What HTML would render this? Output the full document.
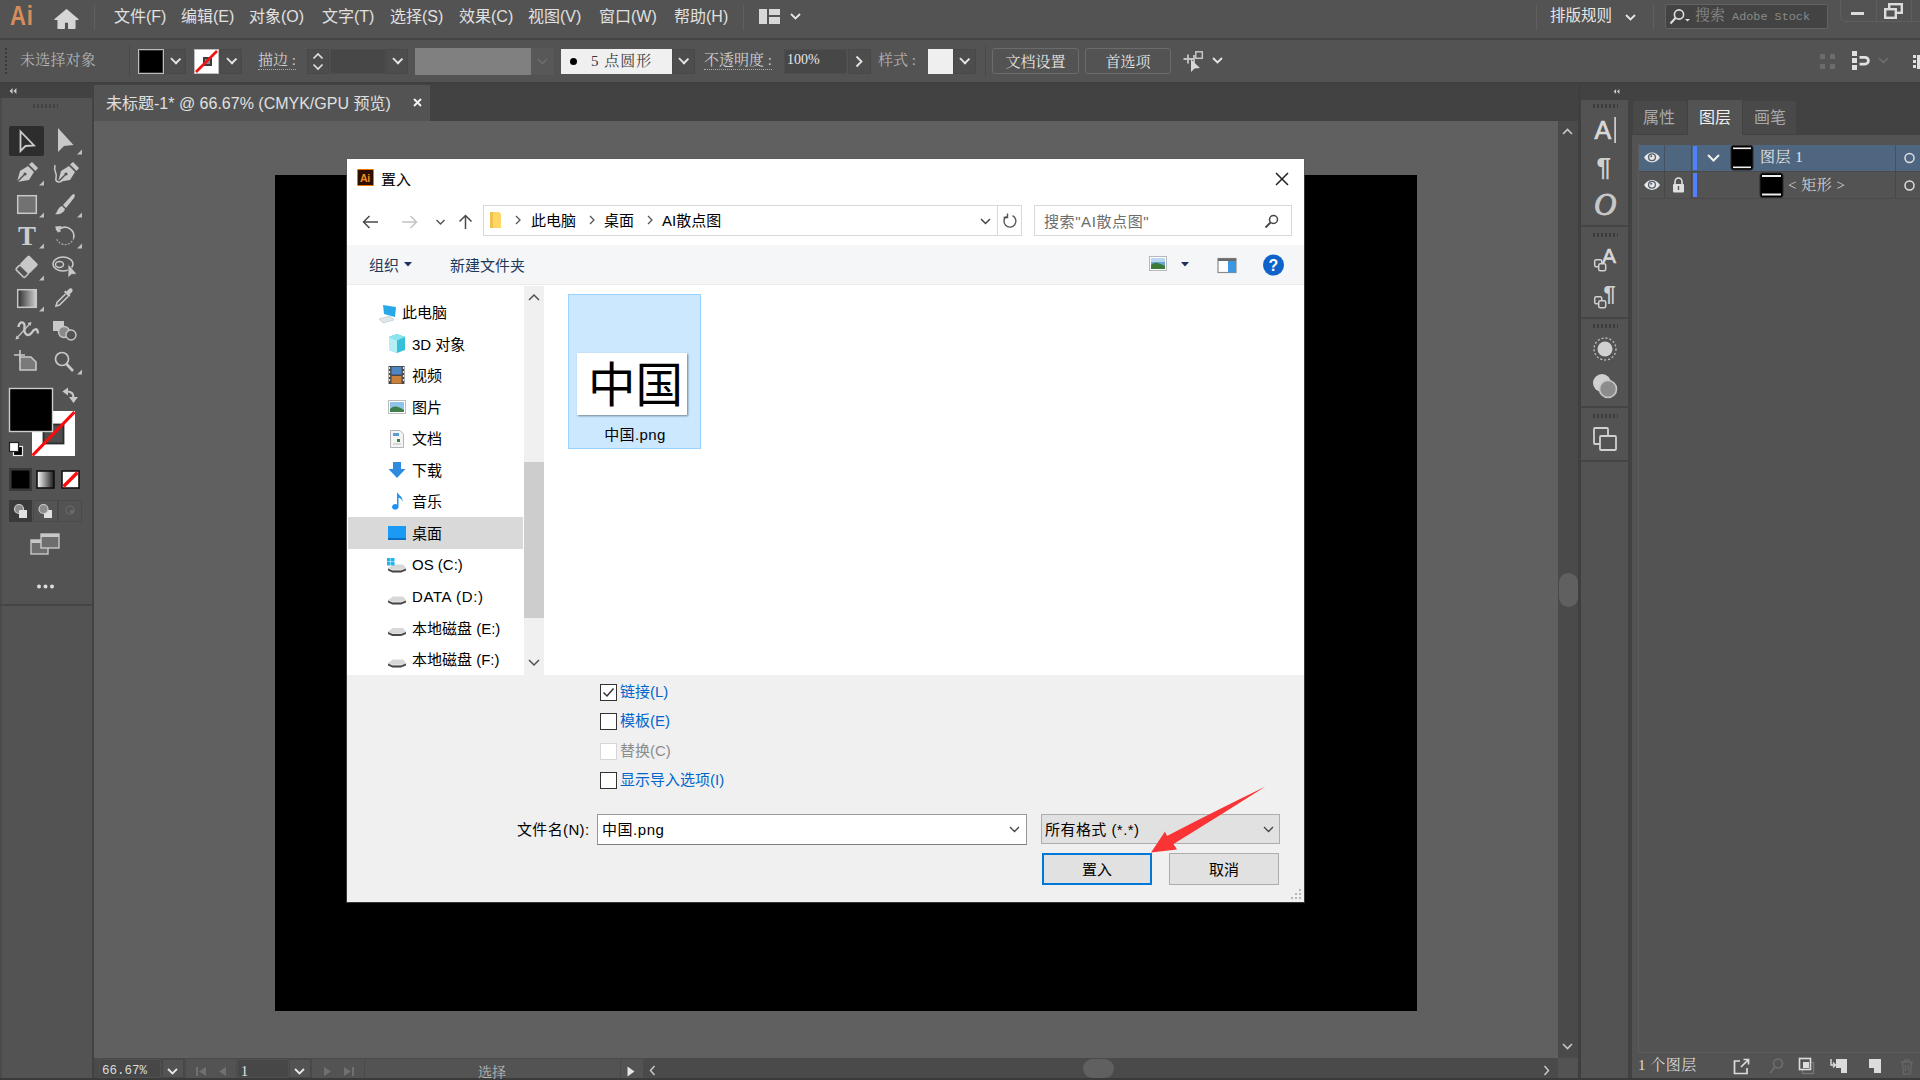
<!DOCTYPE html>
<html lang="zh-CN">
<head>
<meta charset="utf-8">
<title>Adobe Illustrator</title>
<style>
*{box-sizing:border-box;margin:0;padding:0}
html,body{width:1920px;height:1080px;overflow:hidden;background:#535353}
body{font-family:"Liberation Sans","Noto Sans CJK SC",sans-serif;font-size:15px;color:#dcdcdc;position:relative}
.abs{position:absolute}
.t{position:absolute;white-space:nowrap;line-height:1}
svg{position:absolute;overflow:visible}
/* ---------- app chrome ---------- */
#menubar{left:0;top:0;width:1920px;height:38px;background:#535353}
#menusep{left:0;top:38px;width:1920px;height:2px;background:#454545}
#ctrlbar{left:0;top:40px;width:1920px;height:43px;background:#535353}
#ctrlsep{left:0;top:82px;width:1920px;height:2px;background:#3f3f3f}
#tabbar{left:94px;top:84px;width:1484px;height:37px;background:#424242}
#tab{left:94px;top:85px;width:336px;height:36px;background:#535353}
#canvas{left:94px;top:121px;width:1464px;height:937px;background:#606060}
#artboard{left:275px;top:175px;width:1142px;height:836px;background:#000}
#leftdock{left:0;top:84px;width:92px;height:996px;background:#535353}
#leftgap{left:92px;top:84px;width:2px;height:996px;background:#424242}
#lefthead{left:0;top:84px;width:92px;height:14px;background:#424242}
.menu .t{top:9px;font-size:16px;color:#e0e0e0}
.cb{font-family:"Liberation Serif","Noto Serif CJK SC",serif}
.dd{background:#4d4d4d;border:1px solid #484848}
.dd::after{content:"";position:absolute;left:6.5px;top:4.5px;width:7.5px;height:7.5px;border-right:2.2px solid #e6e6e6;border-bottom:2.2px solid #e6e6e6;transform:rotate(45deg) scale(1,.92);box-sizing:border-box}
.dd2{background:#4d4d4d;border:1px solid #484848}
.btn{border:1px solid #6b6b6b;border-radius:3px;text-align:center;font-size:15px;color:#e6e6e6;line-height:26.5px;background:#535353}
.grip{width:25px;height:4px;background:repeating-linear-gradient(90deg,#3c3c3c 0 2px,transparent 2px 4px)}
.hsep{left:1581px;width:48px;height:2px;background:#454545}
#dialog{left:347px;top:159px;width:957px;height:743px;border-top:1px solid #fff;background:#fff;box-shadow:0 0 0 1px rgba(90,90,90,.6)}
.dl{font-size:15px;color:#000;margin-top:1px}
.ck{width:17px;height:17px;background:#fff;border:1px solid #333}
</style>
</head>
<body>
<!-- ============ MENU BAR ============ -->
<div id="menubar" class="abs menu">
  <div class="t" style="left:10px;top:3px;font-size:27px;font-weight:bold;color:#d58d5c;letter-spacing:0.8px;transform:scaleX(.82);transform-origin:0 0">Ai</div>
  <svg style="left:54.500px;top:8.500px" width="23" height="20" viewBox="0 0 26 21"><path d="M13 0 L26 11 L22.500 11 L22.500 21 L15.500 21 L15.500 14 L10.500 14 L10.500 21 L3.500 21 L3.500 11 L0 11 Z" fill="#d6d6d6" stroke="#d6d6d6" stroke-width="1.500" stroke-linejoin="round"/></svg>
  <div class="abs" style="left:94px;top:5px;width:1px;height:25px;background:#606060"></div>
  <div class="t" style="left:114px">文件(F)</div>
  <div class="t" style="left:181px">编辑(E)</div>
  <div class="t" style="left:249px">对象(O)</div>
  <div class="t" style="left:322px">文字(T)</div>
  <div class="t" style="left:390px">选择(S)</div>
  <div class="t" style="left:459px">效果(C)</div>
  <div class="t" style="left:528px">视图(V)</div>
  <div class="t" style="left:599px">窗口(W)</div>
  <div class="t" style="left:674px">帮助(H)</div>
  <div class="abs" style="left:743px;top:5px;width:1px;height:25px;background:#606060"></div>
  <svg style="left:759px;top:9px" width="21" height="15" viewBox="0 0 21 15"><rect x="0" y="0" width="8" height="15" fill="#d8d8d8"/><rect x="10" y="0" width="11" height="6" fill="#d8d8d8"/><rect x="10" y="8" width="11" height="7" fill="#d8d8d8"/></svg>
  <svg style="left:790px;top:13px" width="11" height="7" viewBox="0 0 11 7"><path d="M1 1 L5.5 5.5 L10 1" fill="none" stroke="#e6e6e6" stroke-width="1.8"/></svg>

  <div class="abs" style="left:1536px;top:5px;width:1px;height:25px;background:#606060"></div>
  <div class="t" style="left:1550px;top:8px;font-size:15.5px;color:#e6e6e6">排版规则</div>
  <svg style="left:1625px;top:14px" width="11" height="7" viewBox="0 0 11 7"><path d="M1 1 L5.5 5.5 L10 1" fill="none" stroke="#e6e6e6" stroke-width="1.8"/></svg>
  <div class="abs" style="left:1653px;top:5px;width:1px;height:25px;background:#606060"></div>
  <div class="abs" style="left:1665px;top:4px;width:163px;height:25px;background:#434343;border:1px solid #626262;border-radius:2px"></div>
  <svg style="left:1669px;top:8px" width="22" height="17" viewBox="0 0 22 17"><circle cx="10" cy="6.5" r="4.6" fill="none" stroke="#e0e0e0" stroke-width="1.6"/><path d="M6.5 10 L1.5 15.5" stroke="#e0e0e0" stroke-width="2"/><path d="M16 11 L21 11 L18.5 13.5 Z" fill="#e0e0e0"/></svg>
  <div class="t cb" style="left:1695px;top:8px;font-size:15px;color:#8a8a8a">搜索<span style="font-family:'Liberation Mono',monospace;font-size:11.8px"> Adobe Stock</span></div>
  <div class="abs" style="left:1840px;top:-6px;width:90px;height:28px;border:1px solid #5e5e5e;border-radius:5px"></div>
  <div class="abs" style="left:1876px;top:0;width:1px;height:22px;background:#5e5e5e"></div>
  <div class="abs" style="left:1911px;top:0;width:1px;height:22px;background:#5e5e5e"></div>
  <div class="abs" style="left:1851px;top:12px;width:13px;height:3px;background:#dcdcdc"></div>
  <svg style="left:1884px;top:3px" width="19" height="16" viewBox="0 0 19 16"><rect x="5.2" y="1.2" width="12.6" height="8.6" fill="none" stroke="#dcdcdc" stroke-width="2.4"/><rect x="1.2" y="6.2" width="10.6" height="8.6" fill="#535353" stroke="#dcdcdc" stroke-width="2.4"/></svg>
</div>
<div id="menusep" class="abs"></div>
<!-- ============ CONTROL BAR ============ -->
<div id="ctrlbar" class="abs">
  <div class="abs" style="left:5px;top:8px;width:2px;height:26px;background:repeating-linear-gradient(#3a3a3a 0 2px,transparent 2px 4px)"></div>
  <div class="t cb" style="left:20px;top:13px;font-size:15px;color:#b4b4b4;letter-spacing:0.2px">未选择对象</div>
  <div class="abs" style="left:129px;top:5px;width:1px;height:32px;background:#494949"></div>
  <!-- fill -->
  <div class="abs" style="left:138px;top:9px;width:26px;height:25px;background:#000;border:1px solid #bdbdbd;box-shadow:inset 0 0 0 1px #333"></div>
  <div class="abs dd" style="left:164px;top:9px;width:22px;height:25px"></div>
  <!-- stroke -->
  <div class="abs" style="left:194px;top:9px;width:25px;height:25px;background:#fff;border:1px solid #bdbdbd"></div>
  <div class="abs" style="left:203px;top:17px;width:9px;height:9px;border:2px solid #3c3c3c;background:#8a8a8a"></div>
  <svg style="left:195px;top:10px" width="23" height="23" viewBox="0 0 23 23"><path d="M1 22 L22 1" stroke="#f01414" stroke-width="2.6"/></svg>
  <div class="abs dd" style="left:220px;top:9px;width:22px;height:25px"></div>
  <div class="t cb" style="left:258px;top:13px;font-size:15px;color:#d0d0d0;border-bottom:1px dotted #aaa;padding-bottom:1px">描边 :</div>
  <div class="abs dd2" style="left:307px;top:9px;width:22px;height:25px"></div>
  <svg style="left:312px;top:12px" width="12" height="19" viewBox="0 0 12 19"><path d="M1.5 6.5 L6 2 L10.5 6.5 M1.5 12.5 L6 17 L10.5 12.5" fill="none" stroke="#e0e0e0" stroke-width="1.7"/></svg>
  <div class="abs" style="left:330px;top:9px;width:56px;height:25px;background:#474747;border:1px solid #4d4d4d"></div>
  <div class="abs dd" style="left:386px;top:9px;width:22px;height:25px"></div>
  <!-- width profile -->
  <div class="abs" style="left:415px;top:8px;width:116px;height:27px;background:#808080"></div>
  <div class="abs" style="left:531px;top:8px;width:23px;height:27px;background:#585858"></div>
  <svg style="left:537px;top:18px" width="11" height="7" viewBox="0 0 11 7"><path d="M1 1 L5.5 5.5 L10 1" fill="none" stroke="#6e6e6e" stroke-width="1.6"/></svg>
  <!-- brush -->
  <div class="abs" style="left:561px;top:9px;width:111px;height:25px;background:#f0f0f0"></div>
  <div class="abs" style="left:570px;top:18px;width:7px;height:7px;border-radius:50%;background:#000"></div>
  <div class="t cb" style="left:591px;top:14px;font-size:15px;color:#3a3a3a;letter-spacing:1px">5 点圆形</div>
  <div class="abs dd" style="left:672px;top:9px;width:23px;height:25px"></div>
  <div class="t cb" style="left:704px;top:13px;font-size:15px;color:#d0d0d0;border-bottom:1px dotted #aaa;padding-bottom:1px">不透明度 :</div>
  <div class="abs" style="left:784px;top:9px;width:63px;height:25px;background:#474747;border:1px solid #4d4d4d"></div>
  <div class="t cb" style="left:787px;top:13px;font-size:14px;color:#e6e6e6">100%</div>
  <div class="abs dd2" style="left:848px;top:9px;width:23px;height:25px"></div>
  <svg style="left:855px;top:15px" width="8" height="13" viewBox="0 0 8 13"><path d="M1.5 1.5 L6.5 6.5 L1.5 11.5" fill="none" stroke="#e6e6e6" stroke-width="1.8"/></svg>
  <div class="t cb" style="left:878px;top:13px;font-size:15px;color:#b4b4b4">样式 :</div>
  <div class="abs" style="left:928px;top:9px;width:25px;height:25px;background:#efefef"></div>
  <div class="abs dd" style="left:953px;top:9px;width:23px;height:25px"></div>
  <div class="abs" style="left:985px;top:5px;width:1px;height:32px;background:#494949"></div>
  <div class="abs btn" style="left:992px;top:8px;width:87px;height:26px"><span class="cb">文档设置</span></div>
  <div class="abs btn" style="left:1085px;top:8px;width:86px;height:26px"><span class="cb">首选项</span></div>
  <svg style="left:1183px;top:11px" width="22" height="22" viewBox="0 0 22 22"><path d="M0.500 8 H11 M5 3.500 V12.500 M11 4 V12" fill="none" stroke="#c4c4c4" stroke-width="1.800"/><rect x="12.800" y="0.800" width="6.500" height="6.500" fill="none" stroke="#c4c4c4" stroke-width="1.500"/><path d="M8 8.500 L8 21 L11.500 17.500 L17 17 Z" fill="#d8d8d8"/></svg>
  <svg style="left:1212px;top:17px" width="11" height="7" viewBox="0 0 11 7"><path d="M1 1 L5.5 5.5 L10 1" fill="none" stroke="#e6e6e6" stroke-width="1.8"/></svg>
  <!-- right icons -->
  <svg style="left:1819px;top:13px" width="17" height="17" viewBox="0 0 17 17"><g fill="#6c6c6c"><rect x="1" y="1" width="5" height="5"/><rect x="11" y="1" width="5" height="5"/><rect x="1" y="11" width="5" height="5"/><rect x="11" y="11" width="5" height="5"/></g></svg>
  <svg style="left:1851px;top:11px" width="22" height="20" viewBox="0 0 22 20"><g fill="#e0e0e0"><rect x="1" y="0" width="5" height="5"/><rect x="1" y="7" width="5" height="5"/><rect x="1" y="14" width="5" height="5"/></g><path d="M8.500 6.300 H14 A3.400 3.400 0 0 1 14 13.100 H8.500" fill="none" stroke="#e0e0e0" stroke-width="2.800"/></svg>
  <svg style="left:1878px;top:17px" width="11" height="7" viewBox="0 0 11 7"><path d="M1 1 L5.5 5.5 L10 1" fill="none" stroke="#6e6e6e" stroke-width="1.6"/></svg>
  <svg style="left:1912px;top:14px" width="8" height="16" viewBox="0 0 8 16"><g fill="#e0e0e0"><rect x="1" y="1" width="3" height="3"/><rect x="1" y="6" width="3" height="3"/><rect x="1" y="11" width="3" height="3"/><rect x="5" y="1" width="3" height="14"/></g></svg>
</div>
<div id="ctrlsep" class="abs"></div>
<!-- ============ DOCUMENT AREA ============ -->
<div id="tabbar" class="abs"></div>
<div id="tab" class="abs"><div class="t" style="left:12px;top:11px;font-size:16px;color:#e0e0e0">未标题-1* @ 66.67% (CMYK/GPU 预览)</div><svg style="left:319px;top:13px" width="9" height="9" viewBox="0 0 9 9"><path d="M1 1 L8 8 M8 1 L1 8" stroke="#f0f0f0" stroke-width="2"/></svg></div>
<div id="canvas" class="abs"></div>
<div id="artboard" class="abs"></div>
<!-- ============ LEFT TOOLBAR ============ -->
<div id="leftdock" class="abs"></div>
<div id="lefthead" class="abs"></div>
<div class="abs" style="left:0;top:98px;width:2px;height:982px;background:#4a4a4a"></div>
<svg style="left:9px;top:88px" width="8" height="6" viewBox="0 0 9 7"><path d="M4 0 L0.5 3.5 L4 7 Z M8.5 0 L5 3.5 L8.5 7 Z" fill="#c8c8c8"/></svg>
<div class="abs" style="left:33px;top:104px;width:25px;height:4px;background:repeating-linear-gradient(90deg,#424242 0 2px,transparent 2px 4px)"></div>
<div id="leftgap" class="abs"></div>
<div class="abs" style="left:0;top:604px;width:92px;height:2px;background:#454545"></div>
<!-- selection tool (active) -->
<div class="abs" style="left:9px;top:126px;width:35px;height:30px;background:#2d2d2d;border-radius:2px"></div>
<svg id="tools" style="left:0;top:120px" width="92" height="500" viewBox="0 120 92 500">
  <g fill="#c8c8c8" stroke="none">
    <!-- tiny corner triangles -->
    <path d="M82 151 v-5 l-5 5z M44 182 v-5 l-5 5z M44 214 v-5 l-5 5z M82 214 v-5 l-5 5z M44 245 v-5 l-5 5z M82 245 v-5 l-5 5z M44 277 v-5 l-5 5z M44 308 v-5 l-5 5z M82 371 v-5 l-5 5z" fill="#c0c0c0" transform="translate(0,3.5)"/>
  </g>
  <!-- row1: selection (outline) & direct selection (filled) -->
  <path d="M20.5 131.5 L20.5 151 L25.5 146 L34 145.5 Z" fill="none" stroke="#cccccc" stroke-width="1.8" stroke-linejoin="miter"/>
  <path d="M58 128 L58 152 L64 146 L73.5 145 Z" fill="#c8c8c8"/>
  <!-- row2: pen, curvature -->
  <g transform="translate(17,162)"><path d="M0 20 L3 9 L11 4 L17 10 L12 18 Z" fill="#c8c8c8"/><path d="M12 2.5 L15 0 L21 6 L18.5 9 Z" fill="#c8c8c8"/><path d="M0 20 L7 13" stroke="#535353" stroke-width="1.4"/><circle cx="8" cy="12" r="1.6" fill="#535353"/></g>
  <g transform="translate(56,162)"><path d="M2 20 L5 9 L13 4 L19 10 L14 18 Z" fill="#c8c8c8"/><path d="M14 2.5 L17 0 L23 6 L20.5 9 Z" fill="#c8c8c8"/><path d="M2 20 L9 13" stroke="#535353" stroke-width="1.4"/><circle cx="10" cy="12" r="1.6" fill="#535353"/><path d="M-1 3 C-3 10 2 11 0 16 C-1 20 3 21 6 19" fill="none" stroke="#c8c8c8" stroke-width="1.5"/></g>
  <!-- row3: rectangle, brush -->
  <rect x="17.700" y="195.700" width="18.600" height="17.600" fill="#727272" stroke="#c8c8c8" stroke-width="1.500"/>
  <g transform="translate(55,194)"><path d="M19 0 C20 1 20 2 19 4 L11 14 L8 11 L17 1 C18 0 18.5 0 19 0Z" fill="#c8c8c8"/><path d="M7 12 L10 15 C9 19 4 21 0 20 C3 18 2 14 7 12Z" fill="#c8c8c8"/></g>
  <!-- row4: Type, rotate -->
  <text x="27" y="244.500" font-family="Liberation Serif,serif" font-weight="bold" font-size="27" fill="#cccccc" text-anchor="middle">T</text>
  <g fill="none" stroke="#c8c8c8" stroke-width="1.7"><path d="M59.500 229 A9 9 0 0 1 73.700 238"/><path d="M73.700 238 A9 9 0 0 1 56.500 238.500" stroke-dasharray="2 1.300" stroke-width="1.200" stroke="#a8a8a8"/></g>
  <path d="M55 226.500 L61.500 226 L58 233 Z" fill="#c8c8c8"/><path d="M56 229 L60.500 231.500" stroke="#c8c8c8" stroke-width="2"/>
  <!-- row5: eraser, lasso -->
  <g transform="translate(28.3,255.4) rotate(44.700)"><rect x="0" y="-0.500" width="13.600" height="13" rx="1.500" fill="#c8c8c8"/><rect x="0.700" y="12.500" width="12.200" height="6.300" rx="1.200" fill="#535353" stroke="#c8c8c8" stroke-width="1.500"/></g>
  <g fill="none" stroke="#c8c8c8" stroke-width="1.5"><ellipse cx="63" cy="264" rx="10" ry="7"/><ellipse cx="59.5" cy="264.5" rx="4" ry="3"/></g>
  <path d="M68 264 L68 278 L71.5 274.5 L77 274 Z" fill="#c8c8c8" stroke="#535353" stroke-width="0.8"/>
  <!-- row6: gradient, eyedropper -->
  <defs><linearGradient id="gr1" x1="0" x2="1"><stop offset="0" stop-color="#2e2e2e"/><stop offset="1" stop-color="#d0d0d0"/></linearGradient></defs>
  <rect x="17.700" y="289.700" width="18.600" height="17.600" fill="url(#gr1)" stroke="#c8c8c8" stroke-width="1.500"/>
  <g transform="translate(54,288)"><path d="M15 1 C17 -1 20 2 18 4 L15.5 6.5 L16.5 7.5 L15 9 L10 4 L11.5 2.5 L12.5 3.5 Z" fill="#c8c8c8"/><path d="M11.5 6 L3 14.5 L2 18 L5.5 17 L14 8.5" fill="none" stroke="#c8c8c8" stroke-width="1.6"/></g>
  <!-- row7: warp/width, shape builder -->
  <g fill="none" stroke="#c8c8c8"><path d="M18.500 327 C19 320.500 25.500 321 24.500 327.500 C23.500 334 28 337.500 31.500 333 C33.500 329.500 37.500 326.500 38 333.500" stroke-width="2.400"/><path d="M16.500 338.500 L30.500 323" stroke-width="1.200"/><path d="M15.500 339.500 l4 -1 l-3 -3z M31.500 322 l-4 1 l3 3z" fill="#c8c8c8" stroke="none"/></g>
  <g><rect x="53" y="321" width="11" height="10" fill="#c8c8c8"/><circle cx="64" cy="332" r="5.5" fill="#8a8a8a" stroke="#c8c8c8" stroke-width="1.4"/><circle cx="71" cy="335" r="5" fill="#535353" stroke="#c8c8c8" stroke-width="1.4"/></g>
  <!-- row8: artboard, zoom -->
  <g fill="none" stroke="#c8c8c8" stroke-width="1.6"><path d="M14 355 H25 M20 350 V362"/><path d="M20 357 H31 L36 362 V370 H20 Z" fill="#7a7a7a"/></g>
  <g fill="none" stroke="#c8c8c8"><circle cx="62" cy="359" r="6.5" stroke-width="1.7"/><path d="M66.5 364 L73 371" stroke-width="2.6"/></g>
  <!-- fill / stroke -->
  <rect x="32" y="411" width="43" height="45" fill="#fff"/>
  <rect x="43.500" y="424.500" width="20" height="19" fill="#4d4d4d" stroke="#2c2c2c" stroke-width="1.800"/>
  <path d="M32.500 455.500 L74.500 412" stroke="#ff0a0a" stroke-width="3.200"/>
  <rect x="9.500" y="388.500" width="43" height="43" fill="#000" stroke="#cccccc" stroke-width="1.4"/>
  <path d="M67 391.500 C71.500 391.500 73.500 394 73.500 397.500" fill="none" stroke="#c8c8c8" stroke-width="2.200"/><path d="M73.500 403 L69 397 H78 Z M62.500 391.500 L68 387.500 V395.500Z" fill="#c8c8c8"/>
  <rect x="13.500" y="446.500" width="9" height="9" fill="#000" stroke="#e8e8e8" stroke-width="1.2"/>
  <rect x="9.500" y="442.500" width="9" height="9" fill="#fff" stroke="#222" stroke-width="1.2"/>
  <!-- colour mode -->
  <rect x="9" y="468" width="23" height="23" fill="#3a3a3a"/>
  <rect x="11.500" y="470.500" width="18" height="18" fill="#000"/>
  <defs><linearGradient id="gr2" x1="0" x2="1"><stop offset="0" stop-color="#fff"/><stop offset="1" stop-color="#1a1a1a"/></linearGradient></defs>
  <rect x="37" y="471" width="17" height="17" fill="url(#gr2)" stroke="#111" stroke-width="1.6"/>
  <rect x="62" y="471" width="17" height="17" fill="#fff" stroke="#111" stroke-width="1.6"/>
  <path d="M63.500 486.500 L77.500 472.500" stroke="#ff0a0a" stroke-width="3.400"/>
  <!-- draw modes -->
  <rect x="9" y="500" width="23" height="22" fill="#3a3a3a"/>
  <rect x="33.500" y="500.500" width="24" height="21" fill="none" stroke="#4a4a4a"/>
  <rect x="58.500" y="500.500" width="23" height="21" fill="none" stroke="#4a4a4a"/>
  <circle cx="19" cy="509" r="4.500" fill="#8c8c8c" stroke="#cccccc" stroke-width="1.2"/><rect x="19" y="510" width="8" height="8" fill="#e0e0e0"/>
  <rect x="44" y="510" width="8" height="8" fill="#e0e0e0"/><circle cx="43.500" cy="509" r="4.500" fill="#8c8c8c" stroke="#cccccc" stroke-width="1.2"/>
  <circle cx="70" cy="510" r="4" fill="none" stroke="#6a6a6a" stroke-width="1.2"/><path d="M70 510 h4 v3 h-4z" fill="#6a6a6a"/>
  <!-- screen mode -->
  <rect x="31" y="540" width="17" height="14" fill="#6e6e6e" stroke="#c8c8c8" stroke-width="1.4"/><rect x="31" y="540" width="17" height="3" fill="#c8c8c8"/>
  <rect x="41" y="534" width="18" height="14" fill="#6e6e6e" stroke="#c8c8c8" stroke-width="1.4"/><rect x="41" y="534" width="18" height="3" fill="#c8c8c8"/>
  <circle cx="39" cy="586.500" r="2" fill="#dcdcdc"/><circle cx="45.500" cy="586.500" r="2" fill="#dcdcdc"/><circle cx="52" cy="586.500" r="2" fill="#dcdcdc"/>
</svg>
<!-- ============ RIGHT DOCK ============ -->
<div id="rightdock" class="abs">
  <!-- canvas v-scrollbar -->
  <div class="abs" style="left:1558px;top:121px;width:20px;height:937px;background:#4a4a4a"></div>
  <svg style="left:1562px;top:128px" width="11" height="7" viewBox="0 0 11 7"><path d="M1 6 L5.5 1.5 L10 6" fill="none" stroke="#c8c8c8" stroke-width="1.6"/></svg>
  <svg style="left:1562px;top:1043px" width="11" height="7" viewBox="0 0 11 7"><path d="M1 1 L5.5 5.5 L10 1" fill="none" stroke="#c8c8c8" stroke-width="1.6"/></svg>
  <div class="abs" style="left:1558.5px;top:573px;width:19px;height:34px;border-radius:9.5px;background:#606060"></div>
  <div class="abs" style="left:1578px;top:84px;width:3px;height:996px;background:#3f3f3f"></div>
  <!-- icon column -->
  <div class="abs" style="left:1581px;top:84px;width:48px;height:16px;background:#424242"></div>
  <svg style="left:1613px;top:89px" width="7" height="5" viewBox="0 0 8 6"><path d="M3.500 0 L0.500 3 L3.500 6 Z M7.500 0 L4.500 3 L7.500 6 Z" fill="#c8c8c8"/></svg>
  <div class="abs" style="left:1581px;top:100px;width:48px;height:980px;background:#535353"></div>
  <div class="abs grip" style="left:1593px;top:104px"></div>
  <div class="abs grip" style="left:1593px;top:233px"></div>
  <div class="abs grip" style="left:1593px;top:324px"></div>
  <div class="abs grip" style="left:1593px;top:414px"></div>
  <div class="abs hsep" style="top:225px"></div>
  <div class="abs hsep" style="top:317px"></div>
  <div class="abs hsep" style="top:406px"></div>
  <div class="abs hsep" style="top:460px"></div>
  <svg style="left:1581px;top:100px" width="48" height="380" viewBox="1581 100 48 380">
    <text x="1594.500" y="139" font-family="Liberation Sans,sans-serif" font-size="25" fill="#d8d8d8" stroke="#d8d8d8" stroke-width="0.700">A</text>
    <rect x="1614.300" y="117" width="1.600" height="26" fill="#d8d8d8"/>
    <text x="1596.500" y="176" font-family="Liberation Sans,sans-serif" font-weight="bold" font-size="26" fill="#d0d0d0">¶</text>
    <text x="1594" y="215" font-family="Liberation Serif,serif" font-style="italic" font-size="31" fill="#c8c8c8" stroke="#c8c8c8" stroke-width="0.900">O</text>
    <!-- char styles -->
    <text x="1602" y="263" font-family="Liberation Sans,sans-serif" font-size="21" fill="#d8d8d8" stroke="#d8d8d8" stroke-width="0.600">A</text>
    <g fill="none" stroke="#d0d0d0" stroke-width="1.500"><rect x="1594.700" y="259.700" width="7" height="7" rx="1.500"/><rect x="1598.700" y="263.700" width="7" height="7" rx="1.500" fill="#535353"/></g>
    <text x="1603.500" y="300.500" font-family="Liberation Sans,sans-serif" font-weight="bold" font-size="22" fill="#d0d0d0">¶</text>
    <g fill="none" stroke="#d0d0d0" stroke-width="1.500"><rect x="1594.700" y="296.700" width="7" height="7" rx="1.500"/><rect x="1598.700" y="300.700" width="7" height="7" rx="1.500" fill="#535353"/></g>
    <!-- appearance -->
    <circle cx="1605" cy="349" r="11" fill="none" stroke="#c0c0c0" stroke-width="1.300" stroke-dasharray="2 2"/>
    <circle cx="1605" cy="349" r="7.500" fill="#d0d0d0"/>
    <!-- transparency -->
    <circle cx="1602" cy="383" r="9" fill="#d0d0d0"/>
    <circle cx="1608" cy="389" r="8.500" fill="#8c8c8c" stroke="#c8c8c8" stroke-width="1.600"/>
    <!-- pathfinder -->
    <g fill="#535353" stroke="#d0d0d0" stroke-width="1.800"><rect x="1594" y="428" width="14" height="16" rx="1"/><rect x="1600" y="436" width="16" height="14" rx="1"/></g>
  </svg>
  <div class="abs" style="left:1628px;top:84px;width:4px;height:996px;background:#424242"></div>
  <!-- panel -->
  <div class="abs" style="left:1632px;top:84px;width:288px;height:16px;background:#424242"></div>
  <div class="abs" style="left:1632px;top:100px;width:288px;height:35px;background:#424242"></div>
  <div class="abs" style="left:1633px;top:101px;width:54px;height:33px;background:#494949"></div>
  <div class="abs" style="left:1688px;top:100px;width:54px;height:36px;background:#535353"></div>
  <div class="abs" style="left:1743px;top:101px;width:53px;height:33px;background:#494949"></div>
  <div class="abs" style="left:1632px;top:135px;width:288px;height:945px;background:#535353"></div>
  <div class="t" style="left:1643px;top:110px;font-size:16px;color:#a9a9a9">属性</div>
  <div class="t" style="left:1699px;top:110px;font-size:16px;color:#f0f0f0">图层</div>
  <div class="t" style="left:1754px;top:110px;font-size:16px;color:#a9a9a9">画笔</div>
  <div class="abs" style="left:1638px;top:143px;width:1px;height:909px;background:#5c5c5c"></div>
  <div class="abs" style="left:1638px;top:1052px;width:282px;height:1px;background:#5c5c5c"></div>
  <!-- layer rows -->
  <div class="abs" style="left:1639px;top:145px;width:281px;height:26px;background:#4f6680"></div>
  <div class="abs" style="left:1639px;top:171px;width:281px;height:1px;background:#4a4a4a"></div>
  <div class="abs" style="left:1639px;top:198px;width:281px;height:1px;background:#4a4a4a"></div>
  <div class="abs" style="left:1664px;top:145px;width:1px;height:53px;background:rgba(60,60,60,.5)"></div>
  <div class="abs" style="left:1691px;top:145px;width:1px;height:53px;background:rgba(60,60,60,.5)"></div>
  <div class="abs" style="left:1895px;top:145px;width:1px;height:53px;background:rgba(60,60,60,.5)"></div>
  <div class="abs" style="left:1693px;top:146px;width:4px;height:24px;background:#4f80ff"></div>
  <div class="abs" style="left:1693px;top:173px;width:4px;height:24px;background:#4f80ff"></div>
  <svg style="left:1639px;top:145px" width="281" height="53" viewBox="1639 145 281 53">
    <g id="eye"><path d="M1644 157.500 C1648.500 150.800 1655.500 150.800 1660 157.500 C1655.500 164 1648.500 164 1644 157.500Z" fill="#e6e6e6"/><circle cx="1652" cy="157.300" r="3.400" fill="none" stroke="#555f6a" stroke-width="1.300"/><circle cx="1651.200" cy="156.300" r="1" fill="#555f6a"/></g>
    <use href="#eye" y="27.500"/>
    <path d="M1708 155 L1713.500 160.500 L1719 155" fill="none" stroke="#f0f0f0" stroke-width="2"/>
    <g><rect x="1731" y="145.500" width="22" height="24.500" rx="2.500" fill="#000" stroke="#2a2a2a"/><rect x="1733" y="147.500" width="18" height="1.600" fill="#f0f0f0"/><rect x="1733" y="166.500" width="18" height="1.600" fill="#f0f0f0"/></g>
    <g><rect x="1760" y="173" width="23" height="24.500" rx="2.500" fill="#000" stroke="#2a2a2a"/><rect x="1762" y="175" width="19" height="2" fill="#f0f0f0"/><rect x="1762" y="193.500" width="19" height="2" fill="#f0f0f0"/></g>
    <circle cx="1909.500" cy="158" r="4.500" fill="none" stroke="#e0e0e0" stroke-width="1.500"/>
    <circle cx="1909.500" cy="185.500" r="4.500" fill="none" stroke="#e0e0e0" stroke-width="1.500"/>
    <g fill="#e0e0e0"><rect x="1673" y="184" width="11" height="8.500" rx="1"/><path d="M1675 184 V181.500 A3.500 3.500 0 0 1 1682 181.500 V184" fill="none" stroke="#e0e0e0" stroke-width="1.600"/><rect x="1677.800" y="186" width="1.400" height="4" fill="#535353"/></g>
  </svg>
  <div class="t cb" style="left:1760px;top:150px;font-size:15px;color:#e6e6e6;letter-spacing:0.5px">图层 1</div>
  <div class="t cb" style="left:1788px;top:178px;font-size:15px;color:#d6d6d6;letter-spacing:0.5px">&lt; 矩形 &gt;</div>
  <!-- panel footer -->
  <div class="t cb" style="left:1638px;top:1058px;font-size:15px;color:#dcdcdc;letter-spacing:0.5px">1 个图层</div>
  <svg style="left:1730px;top:1056px" width="190" height="22" viewBox="1730 1056 190 22">
    <g fill="none" stroke="#dcdcdc" stroke-width="1.700"><path d="M1740 1061 H1734.500 V1073.500 H1747 V1068"/><path d="M1741 1067 L1748 1060 M1743.500 1059.500 H1748.500 V1064.500"/></g>
    <g fill="none" stroke="#6e6e6e" stroke-width="1.600"><circle cx="1778" cy="1063.500" r="4.500"/><path d="M1775 1067 L1770 1073"/></g>
    <rect x="1802.500" y="1062.500" width="11" height="11" fill="none" stroke="#777" stroke-width="1.400"/><rect x="1799.500" y="1058.500" width="11" height="11" fill="#535353" stroke="#dcdcdc" stroke-width="1.600"/><rect x="1803" y="1062" width="6" height="6" fill="#dcdcdc"/>
    <path d="M1831 1059 V1065 H1835 M1833 1062.500 L1835.500 1065 L1833 1067.500" fill="none" stroke="#dcdcdc" stroke-width="1.400"/><path d="M1836 1059 H1847 V1073 H1841 V1068 H1836 Z" fill="#dcdcdc"/>
    <path d="M1869 1059 H1881 V1073 H1874 V1068 H1869 Z" fill="#dcdcdc"/>
    <g fill="none" stroke="#666" stroke-width="1.400"><path d="M1901 1062 H1913 M1905 1062 V1060 H1909 V1062 M1902.500 1062 L1903.500 1074 H1910.500 L1911.500 1062 M1905.500 1065 V1071 M1908.500 1065 V1071"/></g>
  </svg>
</div>
<!-- ============ STATUS BAR ============ -->
<div id="status" class="abs">
  <div class="abs" style="left:94px;top:1058px;width:1464px;height:20px;background:#4a4a4a"></div>
  <div class="abs" style="left:1558px;top:1058px;width:20px;height:19px;background:#535353"></div>
  <div class="abs" style="left:0;top:1078px;width:1920px;height:2px;background:#3a3a3a"></div>
  <div class="abs" style="left:99px;top:1059px;width:62px;height:19px;background:#474747;border:1px solid #505050"></div>
  <div class="t cb" style="left:102px;top:1065px;font-size:14px;color:#dcdcdc;font-family:'Liberation Mono','Noto Serif CJK SC',monospace;font-size:12.500px">66.67%</div>
  <div class="abs" style="left:162px;top:1059px;width:22px;height:19px;background:#535353;border:1px solid #474747"></div>
  <svg style="left:167px;top:1068px" width="11" height="7" viewBox="0 0 11 7"><path d="M1 1 L5.500 5.500 L10 1" fill="none" stroke="#e6e6e6" stroke-width="1.800"/></svg>
  <div class="abs" style="left:186px;top:1059px;width:50px;height:19px;background:#535353"></div>
  <svg style="left:196px;top:1066px" width="36" height="11" viewBox="0 0 36 11"><g fill="#707070"><rect x="0" y="1" width="2" height="9"/><path d="M10 1 V10 L3 5.500Z"/><path d="M30 1 V10 L23 5.500Z"/></g></svg>
  <div class="abs" style="left:237px;top:1059px;width:52px;height:19px;background:#474747;border:1px solid #505050"></div>
  <div class="t cb" style="left:241px;top:1065px;font-size:14px;color:#e6e6e6">1</div>
  <div class="abs" style="left:289px;top:1059px;width:22px;height:19px;background:#535353;border:1px solid #474747"></div>
  <svg style="left:294px;top:1068px" width="11" height="7" viewBox="0 0 11 7"><path d="M1 1 L5.500 5.500 L10 1" fill="none" stroke="#e6e6e6" stroke-width="1.800"/></svg>
  <div class="abs" style="left:312px;top:1059px;width:52px;height:19px;background:#535353"></div>
  <svg style="left:322px;top:1066px" width="36" height="11" viewBox="0 0 36 11"><g fill="#707070"><path d="M2 1 V10 L9 5.500Z"/><path d="M22 1 V10 L29 5.500Z"/><rect x="30" y="1" width="2" height="9"/></g></svg>
  <div class="abs" style="left:365px;top:1059px;width:255px;height:19px;background:#535353"></div>
  <div class="t cb" style="left:478px;top:1066px;font-size:14px;color:#b8b8b8">选择</div>
  <div class="abs" style="left:621px;top:1059px;width:22px;height:19px;background:#535353"></div>
  <svg style="left:627px;top:1066px" width="8" height="11" viewBox="0 0 8 11"><path d="M0.500 0.500 V10.500 L7.500 5.500Z" fill="#e6e6e6"/></svg>
  <svg style="left:649px;top:1065px" width="7" height="11" viewBox="0 0 7 11"><path d="M5.500 1 L1.500 5.500 L5.500 10" fill="none" stroke="#c8c8c8" stroke-width="1.500"/></svg>
  <svg style="left:1543px;top:1065px" width="7" height="11" viewBox="0 0 7 11"><path d="M1.500 1 L5.500 5.500 L1.500 10" fill="none" stroke="#c8c8c8" stroke-width="1.500"/></svg>
  <div class="abs" style="left:1083px;top:1058.5px;width:31px;height:19.5px;border-radius:9.5px;background:#606060"></div>
</div>
<!-- ============ DIALOG ============ -->
<div id="dialog" class="abs">
  <!-- title -->
  <div class="abs" style="left:10px;top:9px;width:17px;height:17px;background:#2e0e00;border:1.500px solid #e87800;border-radius:1px"></div>
  <div class="t" style="left:13px;top:12px;font-size:10.5px;font-weight:bold;color:#f28c1e;letter-spacing:-0.3px;margin-top:1px">Ai</div>
  <div class="t dl" style="left:34px;top:11px;color:#000">置入</div>
  <svg style="left:928px;top:12px" width="14" height="14" viewBox="0 0 14 14"><path d="M1 1 L13 13 M13 1 L1 13" stroke="#222" stroke-width="1.500"/></svg>
  <!-- nav row -->
  <svg style="left:15px;top:54px" width="115" height="16" viewBox="0 0 115 16"><g fill="none" stroke-width="1.500"><path d="M1.500 8 H16 M7.500 2 L1.500 8 L7.500 14" stroke="#4a4a4a"/><path d="M40 8 H54.500 M48.500 2 L54.500 8 L48.500 14" stroke="#c4c4c4"/><path d="M74.500 6 L78.500 10 L82.500 6" stroke="#555"/><path d="M103.500 15 V1.500 M97.500 7.500 L103.500 1.500 L109.500 7.500" stroke="#4a4a4a"/></g></svg>
  <div class="abs" style="left:136px;top:45px;width:515px;height:31px;background:#fff;border:1px solid #d9d9d9"></div>
  <div class="abs" style="left:650px;top:45px;width:25px;height:31px;background:#fff;border:1px solid #d9d9d9"></div>
  <svg style="left:142px;top:51px" width="14" height="18" viewBox="0 0 14 18"><path d="M1 1 H10 L12 3 V17 H1 Z" fill="#ffd767"/><path d="M1 1 H4 V17 H1Z" fill="#f2c14e"/></svg>
  <svg style="left:168px;top:55px" width="6" height="10" viewBox="0 0 6 10"><path d="M1 1 L5 5 L1 9" fill="none" stroke="#555" stroke-width="1.300"/></svg>
  <div class="t dl" style="left:184px;top:52px;color:#000">此电脑</div>
  <svg style="left:242px;top:55px" width="6" height="10" viewBox="0 0 6 10"><path d="M1 1 L5 5 L1 9" fill="none" stroke="#555" stroke-width="1.300"/></svg>
  <div class="t dl" style="left:257px;top:52px;color:#000">桌面</div>
  <svg style="left:300px;top:55px" width="6" height="10" viewBox="0 0 6 10"><path d="M1 1 L5 5 L1 9" fill="none" stroke="#555" stroke-width="1.300"/></svg>
  <div class="t dl" style="left:315px;top:52px;color:#000">AI散点图</div>
  <svg style="left:633px;top:58px" width="11" height="7" viewBox="0 0 11 7"><path d="M1 1 L5.500 5.500 L10 1" fill="none" stroke="#444" stroke-width="1.500"/></svg>
  <svg style="left:655px;top:53px" width="16" height="16" viewBox="0 0 16 16"><path d="M10.500 2.700 A6 6 0 1 1 4.500 3.200" fill="none" stroke="#555" stroke-width="1.400"/><path d="M5.500 0.500 V4.500 H1.500" fill="none" stroke="#555" stroke-width="1.400"/></svg>
  <div class="abs" style="left:687px;top:45px;width:258px;height:31px;background:#fff;border:1px solid #d9d9d9"></div>
  <div class="t dl" style="left:697px;top:53px;color:#6d6d6d;letter-spacing:0.6px">搜索"AI散点图"</div>
  <svg style="left:917px;top:54px" width="15" height="15" viewBox="0 0 15 15"><circle cx="9.500" cy="5.500" r="4" fill="none" stroke="#444" stroke-width="1.500"/><path d="M6.500 8.500 L1.500 13.500" stroke="#444" stroke-width="1.800"/></svg>
  <!-- command bar -->
  <div class="abs" style="left:0;top:85px;width:957px;height:40px;background:#f5f6f7;border-bottom:1px solid #ebebeb"></div>
  <div class="t dl" style="left:22px;top:97px;color:#1e395b">组织</div>
  <svg style="left:57px;top:102px" width="8" height="5" viewBox="0 0 8 5"><path d="M0 0 H8 L4 4.500Z" fill="#1e2f5b"/></svg>
  <div class="t dl" style="left:103px;top:97px;color:#1e395b">新建文件夹</div>
  <svg style="left:802px;top:95px" width="140" height="24" viewBox="0 0 140 24">
    <rect x="0.500" y="1.500" width="17" height="14" fill="#fff" stroke="#b8b8b8"/><rect x="2" y="3" width="14" height="11" fill="#6aa7d6"/><path d="M2 10 C6 6 10 8 16 11 V14 H2Z" fill="#3d7a3a"/><rect x="2" y="3" width="14" height="4" fill="#b9d8ef"/>
    <path d="M32 7 H40 L36 11.500Z" fill="#1e2f5b"/>
    <rect x="69" y="3.500" width="18" height="14" fill="#fff" stroke="#8a8a8a" stroke-width="1.200"/><rect x="69" y="3.500" width="18" height="2.500" fill="#6a6a6a"/><rect x="79" y="6" width="8" height="11.500" fill="#3c96e0"/>
    <circle cx="124.500" cy="10" r="10.500" fill="#0d63c9"/><text x="124.500" y="15.500" text-anchor="middle" font-family="Liberation Sans,sans-serif" font-weight="bold" font-size="16" fill="#fff">?</text>
  </svg>
  <!-- nav pane -->
  <div class="abs" style="left:1px;top:126px;width:176px;height:389px;background:#fff"></div>
  <div class="abs" style="left:1px;top:357px;width:175px;height:32px;background:#d9d9d9"></div>
  <div class="abs" style="left:177px;top:126px;width:20px;height:389px;background:#f0f0f0"></div>
  <div class="abs" style="left:177px;top:302px;width:20px;height:156px;background:#cdcdcd"></div>
  <svg style="left:181px;top:133px" width="12" height="8" viewBox="0 0 12 8"><path d="M1 7 L6 2 L11 7" fill="none" stroke="#505050" stroke-width="1.500"/></svg>
  <svg style="left:181px;top:499px" width="12" height="8" viewBox="0 0 12 8"><path d="M1 1 L6 6 L11 1" fill="none" stroke="#505050" stroke-width="1.500"/></svg>
  <div class="t dl" style="left:55px;top:144px">此电脑</div>
  <div class="t dl" style="left:65px;top:176px">3D 对象</div>
  <div class="t dl" style="left:65px;top:207px">视频</div>
  <div class="t dl" style="left:65px;top:239px">图片</div>
  <div class="t dl" style="left:65px;top:270px">文档</div>
  <div class="t dl" style="left:65px;top:302px">下载</div>
  <div class="t dl" style="left:65px;top:333px">音乐</div>
  <div class="t dl" style="left:65px;top:365px">桌面</div>
  <div class="t dl" style="left:65px;top:396px">OS (C:)</div>
  <div class="t dl" style="left:65px;top:428px;letter-spacing:0.6px">DATA (D:)</div>
  <div class="t dl" style="left:65px;top:460px">本地磁盘 (E:)</div>
  <div class="t dl" style="left:65px;top:491px">本地磁盘 (F:)</div>
  <svg id="navicons" style="left:0;top:126px" width="177" height="389" viewBox="347 286 177 389">
    <!-- this pc -->
    <path d="M383 305 L396 307 L395 317 L384 314Z" fill="#29a8e8"/><path d="M379 319 L390 316 L394 320 L383 323Z" fill="#dfe6ea" stroke="#b8c4cc" stroke-width="0.600"/>
    <!-- 3d -->
    <path d="M397 334 L405 337 V350 L397 353 L389 350 V337Z" fill="#35c1d9"/><path d="M397 334 L405 337 L397 340.500 L389 337Z" fill="#8be4ef"/><path d="M389 337 L397 340.500 V353 L389 350Z" fill="#b5eef5"/>
    <!-- video -->
    <rect x="388.500" y="366" width="16" height="18" fill="#4a4a4a"/><rect x="391.500" y="367" width="10" height="7.500" fill="#4f86c6"/><rect x="391.500" y="376" width="10" height="7.500" fill="#c9803a"/><path d="M389.500 367 v2 M389.500 371 v2 M389.500 375 v2 M389.500 379 v2 M403.500 367 v2 M403.500 371 v2 M403.500 375 v2 M403.500 379 v2" stroke="#e8e8e8" stroke-width="1.200"/>
    <!-- pictures -->
    <rect x="388.500" y="400.500" width="17" height="13" fill="#fff" stroke="#bdbdbd"/><rect x="390" y="402" width="14" height="10" fill="#8ec3ea"/><path d="M390 409 C394 405 398 406 404 410 V412 H390Z" fill="#3f7d4a"/>
    <!-- docs -->
    <path d="M390.500 430.500 H400 L403.500 434 V447.500 H390.500Z" fill="#f4f4f4" stroke="#b5b5b5"/><rect x="393" y="433" width="6" height="3" fill="#5a9bd8"/><rect x="397" y="439" width="3" height="3" fill="#3f7d4a"/><path d="M393 444 H401" stroke="#bbb"/>
    <!-- downloads -->
    <path d="M393 462 H401 V469 H405.500 L397 478 L388.500 469 H393Z" fill="#2f8be0"/>
    <!-- music -->
    <path d="M397 492 C399 496 403 496 402.500 502 C402 498.500 399.500 498 398.500 497.500 V507 A3.200 2.800 0 1 1 397 504.500Z" fill="#1e90f0"/>
    <!-- desktop -->
    <rect x="388" y="526" width="18" height="14" fill="#1b9af5"/><rect x="388" y="538" width="18" height="2" fill="#0f6fc2"/>
    <!-- drives -->
    <g id="drv"><path d="M388 568 L393 564.500 H403 L406 568 V570.500 L401 572.500 H392.500 L388 570.500Z" fill="#d8d8d8"/><path d="M388 568 L392.500 570 H401 L406 568 V570.500 L401 572.500 H392.500 L388 570.500Z" fill="#4a4a4a"/><path d="M388 568 L392.500 570 H401 L406 568" fill="none" stroke="#f4f4f4" stroke-width="0.800"/></g>
    <use href="#drv" y="32"/><use href="#drv" y="63.500"/><use href="#drv" y="95"/>
    <path d="M387 558 h3.500 v3.500 h-3.500z M391 558 h3.500 v3.500 h-3.500z M387 562 h3.500 v3.500 h-3.500z M391 562 h3.500 v3.500 h-3.500z" fill="#19b5f5"/>
  </svg>
  <!-- file pane -->
  <div class="abs" style="left:197px;top:126px;width:760px;height:389px;background:#fff"></div>
  <div class="abs" style="left:221px;top:134px;width:133px;height:155px;background:#cce8ff;border:1px solid #99d1ff"></div>
  <div class="abs" style="left:230px;top:193px;width:110px;height:62px;background:#fff;box-shadow:1px 1px 2px rgba(0,0,0,.45)"></div>
  <div class="t" style="left:241px;top:197.5px;font-size:47.5px;color:#000;font-family:'Noto Sans CJK SC',sans-serif;letter-spacing:0px">中国</div>
  <div class="t dl" style="left:221px;top:266px;width:134px;text-align:center;color:#000;letter-spacing:0.4px">中国.png</div>
  <!-- lower area -->
  <div class="abs" style="left:0;top:515px;width:957px;height:227px;background:#f0f0f0"></div>
  <div class="abs ck" style="left:253px;top:524px"></div>
  <svg style="left:255px;top:527px" width="13" height="11" viewBox="0 0 13 11"><path d="M1.500 5.500 L5 9 L11.500 1.500" fill="none" stroke="#333" stroke-width="1.500"/></svg>
  <div class="abs ck" style="left:253px;top:553px"></div>
  <div class="abs ck" style="left:253px;top:583px;border-color:#d6d6d6"></div>
  <div class="abs ck" style="left:253px;top:612px"></div>
  <div class="t dl" style="left:273px;top:523px;color:#0066cc">链接(L)</div>
  <div class="t dl" style="left:273px;top:552px;color:#0066cc">模板(E)</div>
  <div class="t dl" style="left:273px;top:582px;color:#8c8c8c">替换(C)</div>
  <div class="t dl" style="left:273px;top:611px;color:#0066cc">显示导入选项(I)</div>
  <div class="t dl" style="left:170px;top:661px;color:#000;letter-spacing:0.35px">文件名(N):</div>
  <div class="abs" style="left:250px;top:654px;width:430px;height:31px;background:#fff;border:1px solid #9a9a9a;border-bottom-color:#7e7e7e"></div>
  <div class="t dl" style="left:255px;top:661px;color:#000;letter-spacing:0.55px">中国.png</div>
  <svg style="left:662px;top:666px" width="11" height="7" viewBox="0 0 11 7"><path d="M1 1 L5.500 5.500 L10 1" fill="none" stroke="#444" stroke-width="1.300"/></svg>
  <div class="abs" style="left:694px;top:654px;width:239px;height:30px;background:#e1e1e1;border:1px solid #adadad"></div>
  <div class="t dl" style="left:698px;top:661px;color:#000;letter-spacing:0.45px">所有格式 (*.*)</div>
  <svg style="left:916px;top:666px" width="11" height="7" viewBox="0 0 11 7"><path d="M1 1 L5.500 5.500 L10 1" fill="none" stroke="#444" stroke-width="1.300"/></svg>
  <div class="abs" style="left:695px;top:693px;width:110px;height:32px;background:#e1e1e1;border:2px solid #0078d7"></div>
  <div class="t dl" style="left:695px;top:701px;width:110px;text-align:center;color:#000">置入</div>
  <div class="abs" style="left:822px;top:693px;width:110px;height:32px;background:#e1e1e1;border:1px solid #adadad"></div>
  <div class="t dl" style="left:822px;top:701px;width:110px;text-align:center;color:#000">取消</div>
  <svg style="left:943px;top:728px" width="12" height="12" viewBox="0 0 12 12"><g fill="#b8b8b8"><rect x="9" y="1" width="2" height="2"/><rect x="5" y="5" width="2" height="2"/><rect x="9" y="5" width="2" height="2"/><rect x="1" y="9" width="2" height="2"/><rect x="5" y="9" width="2" height="2"/><rect x="9" y="9" width="2" height="2"/></g></svg>
  <!-- red arrow -->
  <svg style="left:0;top:0" width="957" height="742" viewBox="347 160 957 742"><path d="M1265.500 786.500 Q1219 816 1173.500 844 L1177 849.500 L1151 852.500 L1165 831.500 L1167 836 Q1214 811.500 1265.500 786.500Z" fill="#fa3434"/></svg>
</div>
</body>
</html>
